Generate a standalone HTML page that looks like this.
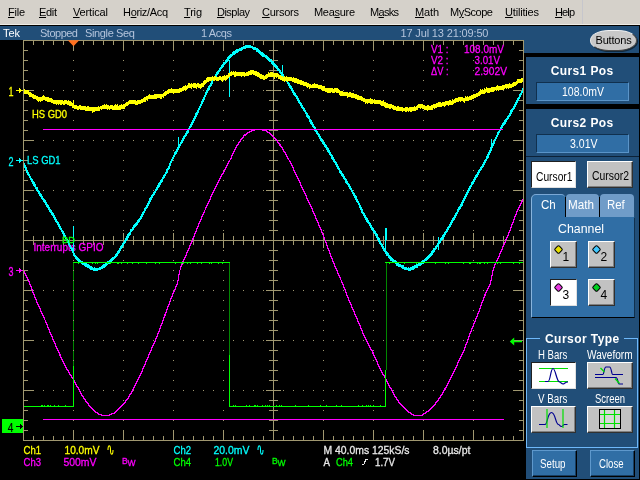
<!DOCTYPE html>
<html><head><meta charset="utf-8"><title>Tek scope</title>
<style>
html,body{margin:0;padding:0;background:#000;}
body{width:640px;height:480px;position:relative;overflow:hidden;font-family:"Liberation Sans",sans-serif;}
#menubar{will-change:transform;position:absolute;left:0;top:0;width:640px;height:25px;box-sizing:border-box;border-bottom:1px solid #eeece6;background:#d5d1ca;}
#menubar .mi{position:absolute;top:6px;font-size:11px;line-height:12px;color:#000;white-space:nowrap;}
#menubar .mi u{text-decoration:underline;}
#menubar .vline{position:absolute;left:582px;top:0;width:1px;height:24px;background:#c6c6cc;}
#status{will-change:transform;position:absolute;left:0;top:26px;width:526px;height:14px;background:#214e78;}
#status .st{position:absolute;top:1px;font-size:11px;line-height:12px;white-space:nowrap;}
#scope{position:absolute;left:0;top:0;will-change:transform;}
#scope text{font-family:"Liberation Sans",sans-serif;}
#panel{will-change:transform;position:absolute;left:526px;top:26px;width:113px;height:453px;background:#214e78;overflow:hidden;}
#panel div{position:absolute;box-sizing:border-box;}
.lb{white-space:nowrap;}
.blk{left:0;width:114px;background:#000;}
.sep{left:0;width:114px;height:1px;background:#0c2238;}
.pill{background:#c8c8c8;border-radius:19px / 10.5px;letter-spacing:-0.2px;border:1px solid #888;border-top-color:#f0f0f0;border-left-color:#e8e8e8;border-bottom-color:#404040;border-right-color:#505050;box-shadow:1px 1px 0 #10283c;text-align:center;font-size:11px;line-height:19px;color:#000;}
.fld{background:#306ea5;border:1px solid;border-color:#10304e #5a94c8 #5a94c8 #10304e;}
.btn{background:#c2c2c2;border:1px solid;border-color:#fff #303030 #303030 #fff;box-shadow:inset -1px -1px 0 #808080;}
.btn.sel{background:#fff;border-color:#202020 #e0e0e0 #e0e0e0 #202020;box-shadow:none;}
.bbtn{background:#306ea5;border:1px solid;border-color:#5e98cc #000 #000 #5e98cc;box-shadow:inset -1px -1px 0 #173e62;}
.tabbody{background:#306ea5;border:1px solid;border-color:#306ea5 #10304e #000 #88b4dc;}
.tab{background:#709cc8;border-radius:4px 4px 0 0;}
.tab.on{background:#306ea5;border-top:1px solid #7aa8d6;border-left:1px solid #88b4dc;border-radius:5px 4px 0 0;}
.tsep{width:1px;background:#000;}
.grp{border:1px solid #6eb8fa;}
.grpt{background:#214e78;}
.led{position:absolute;left:3.5px;top:3.5px;width:5px;height:5px;border-radius:1.8px;border:1px solid #000;transform:rotate(45deg);}
.num{position:absolute;left:11.5px;top:9px;font-size:12px;line-height:13px;font-weight:normal;color:#000;}
</style></head>
<body>
<div id="menubar"><span class="mi" style="left:8px;letter-spacing:-0.24px"><u>F</u>ile</span><span class="mi" style="left:39px;letter-spacing:-0.32px"><u>E</u>dit</span><span class="mi" style="left:73px;letter-spacing:-0.15px"><u>V</u>ertical</span><span class="mi" style="left:123px;letter-spacing:-0.33px">H<u>o</u>riz/Acq</span><span class="mi" style="left:184px;letter-spacing:-0.18px"><u>T</u>rig</span><span class="mi" style="left:217px;letter-spacing:-0.51px"><u>D</u>isplay</span><span class="mi" style="left:262px;letter-spacing:-0.25px"><u>C</u>ursors</span><span class="mi" style="left:314px;letter-spacing:-0.30px">Mea<u>s</u>ure</span><span class="mi" style="left:370px;letter-spacing:-0.70px">M<u>a</u>sks</span><span class="mi" style="left:415px;letter-spacing:-0.15px"><u>M</u>ath</span><span class="mi" style="left:450px;letter-spacing:-0.48px">M<u>y</u>Scope</span><span class="mi" style="left:505px;letter-spacing:-0.18px"><u>U</u>tilities</span><span class="mi" style="left:555px;letter-spacing:-0.87px"><u>H</u>elp</span><div class="vline"></div></div>
<div id="status"><span class="st" style="left:3px;color:#fff;letter-spacing:-0.06px">Tek</span><span class="st" style="left:40px;color:#b4c4dc;letter-spacing:-0.50px">Stopped</span><span class="st" style="left:85px;color:#b4c4dc;letter-spacing:-0.36px">Single Seq</span><span class="st" style="left:201px;color:#b4c4dc;letter-spacing:-0.40px">1 Acqs</span><span class="st" style="left:400.5px;color:#b4c4dc;letter-spacing:-0.15px">17 Jul 13 21:09:50</span></div>
<div style="position:absolute;left:524px;top:40px;width:2px;height:13px;background:#214e78"></div>
<svg id="scope" width="640" height="480" viewBox="0 0 640 480">
<g shape-rendering="crispEdges" stroke="#008800" stroke-width="1">
<path d="M73.5 262V366M229.5 262V355M386.5 262V370"/>
</g>
<path shape-rendering="crispEdges" fill="none" stroke="#a09870" stroke-width="1" d="M23.5 40.5H523.5V440.5H23.5ZM24 50.5h4M523 50.5h-4M24 60.5h4M523 60.5h-4M24 70.5h4M523 70.5h-4M24 80.5h4M523 80.5h-4M24 90.5h10M523 90.5h-10M24 100.5h4M523 100.5h-4M24 110.5h4M523 110.5h-4M24 120.5h4M523 120.5h-4M24 130.5h4M523 130.5h-4M24 140.5h10M523 140.5h-10M24 150.5h4M523 150.5h-4M24 160.5h4M523 160.5h-4M24 170.5h4M523 170.5h-4M24 180.5h4M523 180.5h-4M24 190.5h10M523 190.5h-10M24 200.5h4M523 200.5h-4M24 210.5h4M523 210.5h-4M24 220.5h4M523 220.5h-4M24 230.5h4M523 230.5h-4M24 240.5h10M523 240.5h-10M24 250.5h4M523 250.5h-4M24 260.5h4M523 260.5h-4M24 270.5h4M523 270.5h-4M24 280.5h4M523 280.5h-4M24 290.5h10M523 290.5h-10M24 300.5h4M523 300.5h-4M24 310.5h4M523 310.5h-4M24 320.5h4M523 320.5h-4M24 330.5h4M523 330.5h-4M24 340.5h10M523 340.5h-10M24 350.5h4M523 350.5h-4M24 360.5h4M523 360.5h-4M24 370.5h4M523 370.5h-4M24 380.5h4M523 380.5h-4M24 390.5h10M523 390.5h-10M24 400.5h4M523 400.5h-4M24 410.5h4M523 410.5h-4M24 420.5h4M523 420.5h-4M24 430.5h4M523 430.5h-4M33.5 41v4M33.5 440v-4M43.5 41v4M43.5 440v-4M53.5 41v4M53.5 440v-4M63.5 41v4M63.5 440v-4M73.5 41v10M73.5 440v-10M83.5 41v4M83.5 440v-4M93.5 41v4M93.5 440v-4M103.5 41v4M103.5 440v-4M113.5 41v4M113.5 440v-4M123.5 41v10M123.5 440v-10M133.5 41v4M133.5 440v-4M143.5 41v4M143.5 440v-4M153.5 41v4M153.5 440v-4M163.5 41v4M163.5 440v-4M173.5 41v10M173.5 440v-10M183.5 41v4M183.5 440v-4M193.5 41v4M193.5 440v-4M203.5 41v4M203.5 440v-4M213.5 41v4M213.5 440v-4M223.5 41v10M223.5 440v-10M233.5 41v4M233.5 440v-4M243.5 41v4M243.5 440v-4M253.5 41v4M253.5 440v-4M263.5 41v4M263.5 440v-4M273.5 41v10M273.5 440v-10M283.5 41v4M283.5 440v-4M293.5 41v4M293.5 440v-4M303.5 41v4M303.5 440v-4M313.5 41v4M313.5 440v-4M323.5 41v10M323.5 440v-10M333.5 41v4M333.5 440v-4M343.5 41v4M343.5 440v-4M353.5 41v4M353.5 440v-4M363.5 41v4M363.5 440v-4M373.5 41v10M373.5 440v-10M383.5 41v4M383.5 440v-4M393.5 41v4M393.5 440v-4M403.5 41v4M403.5 440v-4M413.5 41v4M413.5 440v-4M423.5 41v10M423.5 440v-10M433.5 41v4M433.5 440v-4M443.5 41v4M443.5 440v-4M453.5 41v4M453.5 440v-4M463.5 41v4M463.5 440v-4M473.5 41v10M473.5 440v-10M483.5 41v4M483.5 440v-4M493.5 41v4M493.5 440v-4M503.5 41v4M503.5 440v-4M513.5 41v4M513.5 440v-4M273.5 41V440M24 240.5H523M269 50.5h9M269 60.5h9M269 70.5h9M269 80.5h9M266 90.5h15M269 100.5h9M269 110.5h9M269 120.5h9M269 130.5h9M266 140.5h15M269 150.5h9M269 160.5h9M269 170.5h9M269 180.5h9M266 190.5h15M269 200.5h9M269 210.5h9M269 220.5h9M269 230.5h9M269 250.5h9M269 260.5h9M269 270.5h9M269 280.5h9M266 290.5h15M269 300.5h9M269 310.5h9M269 320.5h9M269 330.5h9M266 340.5h15M269 350.5h9M269 360.5h9M269 370.5h9M269 380.5h9M266 390.5h15M269 400.5h9M269 410.5h9M269 420.5h9M269 430.5h9M33.5 236v9M43.5 236v9M53.5 236v9M63.5 236v9M73.5 233v15M83.5 236v9M93.5 236v9M103.5 236v9M113.5 236v9M123.5 233v15M133.5 236v9M143.5 236v9M153.5 236v9M163.5 236v9M173.5 233v15M183.5 236v9M193.5 236v9M203.5 236v9M213.5 236v9M223.5 233v15M233.5 236v9M243.5 236v9M253.5 236v9M263.5 236v9M283.5 236v9M293.5 236v9M303.5 236v9M313.5 236v9M323.5 233v15M333.5 236v9M343.5 236v9M353.5 236v9M363.5 236v9M373.5 233v15M383.5 236v9M393.5 236v9M403.5 236v9M413.5 236v9M423.5 233v15M433.5 236v9M443.5 236v9M453.5 236v9M463.5 236v9M473.5 233v15M483.5 236v9M493.5 236v9M503.5 236v9M513.5 236v9M73 50.5h1M73 60.5h1M73 70.5h1M73 80.5h1M73 90.5h1M73 100.5h1M73 110.5h1M73 120.5h1M73 130.5h1M73 140.5h1M73 150.5h1M73 160.5h1M73 170.5h1M73 180.5h1M73 190.5h1M73 200.5h1M73 210.5h1M73 220.5h1M73 230.5h1M73 240.5h1M73 250.5h1M73 260.5h1M73 270.5h1M73 280.5h1M73 290.5h1M73 300.5h1M73 310.5h1M73 320.5h1M73 330.5h1M73 340.5h1M73 350.5h1M73 360.5h1M73 370.5h1M73 380.5h1M73 390.5h1M73 400.5h1M73 410.5h1M73 420.5h1M73 430.5h1M123 50.5h1M123 60.5h1M123 70.5h1M123 80.5h1M123 90.5h1M123 100.5h1M123 110.5h1M123 120.5h1M123 130.5h1M123 140.5h1M123 150.5h1M123 160.5h1M123 170.5h1M123 180.5h1M123 190.5h1M123 200.5h1M123 210.5h1M123 220.5h1M123 230.5h1M123 240.5h1M123 250.5h1M123 260.5h1M123 270.5h1M123 280.5h1M123 290.5h1M123 300.5h1M123 310.5h1M123 320.5h1M123 330.5h1M123 340.5h1M123 350.5h1M123 360.5h1M123 370.5h1M123 380.5h1M123 390.5h1M123 400.5h1M123 410.5h1M123 420.5h1M123 430.5h1M173 50.5h1M173 60.5h1M173 70.5h1M173 80.5h1M173 90.5h1M173 100.5h1M173 110.5h1M173 120.5h1M173 130.5h1M173 140.5h1M173 150.5h1M173 160.5h1M173 170.5h1M173 180.5h1M173 190.5h1M173 200.5h1M173 210.5h1M173 220.5h1M173 230.5h1M173 240.5h1M173 250.5h1M173 260.5h1M173 270.5h1M173 280.5h1M173 290.5h1M173 300.5h1M173 310.5h1M173 320.5h1M173 330.5h1M173 340.5h1M173 350.5h1M173 360.5h1M173 370.5h1M173 380.5h1M173 390.5h1M173 400.5h1M173 410.5h1M173 420.5h1M173 430.5h1M223 50.5h1M223 60.5h1M223 70.5h1M223 80.5h1M223 90.5h1M223 100.5h1M223 110.5h1M223 120.5h1M223 130.5h1M223 140.5h1M223 150.5h1M223 160.5h1M223 170.5h1M223 180.5h1M223 190.5h1M223 200.5h1M223 210.5h1M223 220.5h1M223 230.5h1M223 240.5h1M223 250.5h1M223 260.5h1M223 270.5h1M223 280.5h1M223 290.5h1M223 300.5h1M223 310.5h1M223 320.5h1M223 330.5h1M223 340.5h1M223 350.5h1M223 360.5h1M223 370.5h1M223 380.5h1M223 390.5h1M223 400.5h1M223 410.5h1M223 420.5h1M223 430.5h1M323 50.5h1M323 60.5h1M323 70.5h1M323 80.5h1M323 90.5h1M323 100.5h1M323 110.5h1M323 120.5h1M323 130.5h1M323 140.5h1M323 150.5h1M323 160.5h1M323 170.5h1M323 180.5h1M323 190.5h1M323 200.5h1M323 210.5h1M323 220.5h1M323 230.5h1M323 240.5h1M323 250.5h1M323 260.5h1M323 270.5h1M323 280.5h1M323 290.5h1M323 300.5h1M323 310.5h1M323 320.5h1M323 330.5h1M323 340.5h1M323 350.5h1M323 360.5h1M323 370.5h1M323 380.5h1M323 390.5h1M323 400.5h1M323 410.5h1M323 420.5h1M323 430.5h1M373 50.5h1M373 60.5h1M373 70.5h1M373 80.5h1M373 90.5h1M373 100.5h1M373 110.5h1M373 120.5h1M373 130.5h1M373 140.5h1M373 150.5h1M373 160.5h1M373 170.5h1M373 180.5h1M373 190.5h1M373 200.5h1M373 210.5h1M373 220.5h1M373 230.5h1M373 240.5h1M373 250.5h1M373 260.5h1M373 270.5h1M373 280.5h1M373 290.5h1M373 300.5h1M373 310.5h1M373 320.5h1M373 330.5h1M373 340.5h1M373 350.5h1M373 360.5h1M373 370.5h1M373 380.5h1M373 390.5h1M373 400.5h1M373 410.5h1M373 420.5h1M373 430.5h1M423 50.5h1M423 60.5h1M423 70.5h1M423 80.5h1M423 90.5h1M423 100.5h1M423 110.5h1M423 120.5h1M423 130.5h1M423 140.5h1M423 150.5h1M423 160.5h1M423 170.5h1M423 180.5h1M423 190.5h1M423 200.5h1M423 210.5h1M423 220.5h1M423 230.5h1M423 240.5h1M423 250.5h1M423 260.5h1M423 270.5h1M423 280.5h1M423 290.5h1M423 300.5h1M423 310.5h1M423 320.5h1M423 330.5h1M423 340.5h1M423 350.5h1M423 360.5h1M423 370.5h1M423 380.5h1M423 390.5h1M423 400.5h1M423 410.5h1M423 420.5h1M423 430.5h1M473 50.5h1M473 60.5h1M473 70.5h1M473 80.5h1M473 90.5h1M473 100.5h1M473 110.5h1M473 120.5h1M473 130.5h1M473 140.5h1M473 150.5h1M473 160.5h1M473 170.5h1M473 180.5h1M473 190.5h1M473 200.5h1M473 210.5h1M473 220.5h1M473 230.5h1M473 240.5h1M473 250.5h1M473 260.5h1M473 270.5h1M473 280.5h1M473 290.5h1M473 300.5h1M473 310.5h1M473 320.5h1M473 330.5h1M473 340.5h1M473 350.5h1M473 360.5h1M473 370.5h1M473 380.5h1M473 390.5h1M473 400.5h1M473 410.5h1M473 420.5h1M473 430.5h1M33 90.5h1M43 90.5h1M53 90.5h1M63 90.5h1M83 90.5h1M93 90.5h1M103 90.5h1M113 90.5h1M133 90.5h1M143 90.5h1M153 90.5h1M163 90.5h1M183 90.5h1M193 90.5h1M203 90.5h1M213 90.5h1M233 90.5h1M243 90.5h1M253 90.5h1M263 90.5h1M283 90.5h1M293 90.5h1M303 90.5h1M313 90.5h1M333 90.5h1M343 90.5h1M353 90.5h1M363 90.5h1M383 90.5h1M393 90.5h1M403 90.5h1M413 90.5h1M433 90.5h1M443 90.5h1M453 90.5h1M463 90.5h1M483 90.5h1M493 90.5h1M503 90.5h1M513 90.5h1M33 140.5h1M43 140.5h1M53 140.5h1M63 140.5h1M83 140.5h1M93 140.5h1M103 140.5h1M113 140.5h1M133 140.5h1M143 140.5h1M153 140.5h1M163 140.5h1M183 140.5h1M193 140.5h1M203 140.5h1M213 140.5h1M233 140.5h1M243 140.5h1M253 140.5h1M263 140.5h1M283 140.5h1M293 140.5h1M303 140.5h1M313 140.5h1M333 140.5h1M343 140.5h1M353 140.5h1M363 140.5h1M383 140.5h1M393 140.5h1M403 140.5h1M413 140.5h1M433 140.5h1M443 140.5h1M453 140.5h1M463 140.5h1M483 140.5h1M493 140.5h1M503 140.5h1M513 140.5h1M33 190.5h1M43 190.5h1M53 190.5h1M63 190.5h1M83 190.5h1M93 190.5h1M103 190.5h1M113 190.5h1M133 190.5h1M143 190.5h1M153 190.5h1M163 190.5h1M183 190.5h1M193 190.5h1M203 190.5h1M213 190.5h1M233 190.5h1M243 190.5h1M253 190.5h1M263 190.5h1M283 190.5h1M293 190.5h1M303 190.5h1M313 190.5h1M333 190.5h1M343 190.5h1M353 190.5h1M363 190.5h1M383 190.5h1M393 190.5h1M403 190.5h1M413 190.5h1M433 190.5h1M443 190.5h1M453 190.5h1M463 190.5h1M483 190.5h1M493 190.5h1M503 190.5h1M513 190.5h1M33 290.5h1M43 290.5h1M53 290.5h1M63 290.5h1M83 290.5h1M93 290.5h1M103 290.5h1M113 290.5h1M133 290.5h1M143 290.5h1M153 290.5h1M163 290.5h1M183 290.5h1M193 290.5h1M203 290.5h1M213 290.5h1M233 290.5h1M243 290.5h1M253 290.5h1M263 290.5h1M283 290.5h1M293 290.5h1M303 290.5h1M313 290.5h1M333 290.5h1M343 290.5h1M353 290.5h1M363 290.5h1M383 290.5h1M393 290.5h1M403 290.5h1M413 290.5h1M433 290.5h1M443 290.5h1M453 290.5h1M463 290.5h1M483 290.5h1M493 290.5h1M503 290.5h1M513 290.5h1M33 340.5h1M43 340.5h1M53 340.5h1M63 340.5h1M83 340.5h1M93 340.5h1M103 340.5h1M113 340.5h1M133 340.5h1M143 340.5h1M153 340.5h1M163 340.5h1M183 340.5h1M193 340.5h1M203 340.5h1M213 340.5h1M233 340.5h1M243 340.5h1M253 340.5h1M263 340.5h1M283 340.5h1M293 340.5h1M303 340.5h1M313 340.5h1M333 340.5h1M343 340.5h1M353 340.5h1M363 340.5h1M383 340.5h1M393 340.5h1M403 340.5h1M413 340.5h1M433 340.5h1M443 340.5h1M453 340.5h1M463 340.5h1M483 340.5h1M493 340.5h1M503 340.5h1M513 340.5h1M33 390.5h1M43 390.5h1M53 390.5h1M63 390.5h1M83 390.5h1M93 390.5h1M103 390.5h1M113 390.5h1M133 390.5h1M143 390.5h1M153 390.5h1M163 390.5h1M183 390.5h1M193 390.5h1M203 390.5h1M213 390.5h1M233 390.5h1M243 390.5h1M253 390.5h1M263 390.5h1M283 390.5h1M293 390.5h1M303 390.5h1M313 390.5h1M333 390.5h1M343 390.5h1M353 390.5h1M363 390.5h1M383 390.5h1M393 390.5h1M403 390.5h1M413 390.5h1M433 390.5h1M443 390.5h1M453 390.5h1M463 390.5h1M483 390.5h1M493 390.5h1M503 390.5h1M513 390.5h1"/>
<text x="32.0" y="118.0" font-size="11" fill="#ffff00" stroke="#ffff00" stroke-width="0.3" textLength="35.0" lengthAdjust="spacingAndGlyphs">HS GD0</text>
<text x="27.0" y="164.3" font-size="11" fill="#00ffff" stroke="#00ffff" stroke-width="0.3" textLength="33.6" lengthAdjust="spacingAndGlyphs">LS GD1</text>
<text x="33.5" y="251.0" font-size="11" fill="#ff00ff" stroke="#ff00ff" stroke-width="0.3" textLength="70.0" lengthAdjust="spacingAndGlyphs">Interrupts GPIO</text>
<g shape-rendering="crispEdges" fill="none" stroke-width="1">
<path stroke="#00ffff" d="M24.5 163V168M25.5 165V170M26.5 167V173M27.5 170V175M28.5 172V176M29.5 174V178M30.5 176V180M31.5 178V182M32.5 179V184M33.5 181V186M34.5 182V187M35.5 184V189M36.5 187V191M37.5 187V192M38.5 190V194M39.5 191V196M40.5 193V197M41.5 194V199M42.5 196V200M43.5 198V202M44.5 199V203M45.5 200V205M46.5 202V207M47.5 204V208M48.5 205V210M49.5 207V212M50.5 209V213M51.5 210V215M52.5 212V216M53.5 213V218M54.5 215V220M55.5 217V222M56.5 219V223M57.5 221V225M58.5 222V227M59.5 224V229M60.5 226V230M61.5 228V232M62.5 230V234M63.5 231V236M64.5 233V237M65.5 235V239M66.5 237V241M67.5 239V243M68.5 240V245M69.5 243V247M70.5 245V249M71.5 247V251M72.5 248V253M73.5 250V256M74.5 253V257M75.5 255V259M76.5 256V260M77.5 257V261M78.5 258V262M79.5 259V263M80.5 260V263M81.5 261V264M82.5 261V265M83.5 262V265M84.5 263V266M85.5 263V267M86.5 263V267M87.5 264V268M88.5 264V268M89.5 265V269M90.5 266V270M91.5 266V270M92.5 267V270M93.5 268V271M94.5 267V271M95.5 268V271M96.5 268V271M97.5 268V271M98.5 268V270M99.5 267V270M100.5 267V270M101.5 266V269M102.5 265V269M103.5 264V268M104.5 264V268M105.5 263V267M106.5 263V266M107.5 261V265M108.5 261V264M109.5 260V264M110.5 259V263M111.5 258V262M112.5 257V261M113.5 257V260M114.5 256V259M115.5 254V258M116.5 253V257M117.5 251V256M118.5 250V254M119.5 248V253M120.5 246V251M121.5 245V249M122.5 243V248M123.5 242V246M124.5 240V244M125.5 238V243M126.5 236V241M127.5 234V240M128.5 233V238M129.5 232V236M130.5 229V235M131.5 229V232M132.5 227V231M133.5 225V230M134.5 224V228M135.5 223V227M136.5 222V226M137.5 220V225M138.5 219V223M139.5 218V222M140.5 216V220M141.5 214V219M142.5 212V217M143.5 211V215M144.5 208V213M145.5 207V211M146.5 205V209M147.5 203V208M148.5 201V206M149.5 198V204M150.5 197V202M151.5 195V200M152.5 194V198M153.5 192V196M154.5 191V195M155.5 189V193M156.5 187V191M157.5 185V190M158.5 183V188M159.5 182V187M160.5 180V185M161.5 179V183M162.5 177V182M163.5 175V179M164.5 174V178M165.5 172V176M166.5 169V174M167.5 168V173M168.5 166V170M169.5 163V169M170.5 161V166M171.5 159V163M172.5 157V161M173.5 155V159M174.5 152V157M175.5 151V155M176.5 149V154M177.5 147V152M178.5 146V150M179.5 144V148M180.5 142V146M181.5 140V144M182.5 138V143M183.5 136V141M184.5 135V139M185.5 133V137M186.5 131V136M187.5 130V134M188.5 128V133M189.5 126V130M190.5 124V128M191.5 122V127M192.5 120V125M193.5 118V123M194.5 116V121M195.5 113V119M196.5 112V117M197.5 110V115M198.5 108V113M199.5 106V110M200.5 104V108M201.5 101V106M202.5 99V104M203.5 97V102M204.5 95V100M205.5 92V97M206.5 90V95M207.5 88V93M208.5 86V91M209.5 85V90M210.5 83V87M211.5 81V86M212.5 79V84M213.5 77V81M214.5 76V80M215.5 74V79M216.5 72V77M217.5 71V75M218.5 70V74M219.5 68V72M220.5 67V71M221.5 65V69M222.5 64V68M223.5 62V67M224.5 62V65M225.5 60V64M226.5 59V63M227.5 57V62M228.5 56V61M229.5 55V59M230.5 54V58M231.5 54V57M232.5 52V56M233.5 51V55M234.5 51V55M235.5 50V54M236.5 49V53M237.5 49V53M238.5 49V52M239.5 48V51M240.5 48V51M241.5 47V51M242.5 47V50M243.5 46V49M244.5 46V49M245.5 45V49M246.5 45V48M247.5 45V48M248.5 45V48M249.5 45V48M250.5 45V48M251.5 46V48M252.5 46V49M253.5 47V50M254.5 47V50M255.5 47V50M256.5 48V52M257.5 48V52M258.5 49V53M259.5 50V54M260.5 51V55M261.5 52V56M262.5 52V57M263.5 53V57M264.5 54V57M265.5 55V58M266.5 55V59M267.5 56V60M268.5 57V61M269.5 58V62M270.5 59V62M271.5 59V64M272.5 61V65M273.5 61V66M274.5 63V67M275.5 64V68M276.5 65V69M277.5 66V71M278.5 68V71M279.5 69V73M280.5 70V74M281.5 72V76M282.5 72V77M283.5 74V78M284.5 76V80M285.5 77V81M286.5 78V82M287.5 80V84M288.5 82V86M289.5 83V88M290.5 85V89M291.5 86V91M292.5 88V93M293.5 90V95M294.5 92V96M295.5 93V97M296.5 95V99M297.5 96V101M298.5 98V103M299.5 100V104M300.5 102V106M301.5 103V108M302.5 105V109M303.5 107V111M304.5 108V112M305.5 110V114M306.5 112V117M307.5 113V118M308.5 115V119M309.5 116V122M310.5 119V124M311.5 120V125M312.5 122V127M313.5 124V128M314.5 126V131M315.5 127V132M316.5 129V134M317.5 131V135M318.5 133V137M319.5 134V139M320.5 136V141M321.5 138V142M322.5 139V144M323.5 141V145M324.5 142V147M325.5 144V148M326.5 145V150M327.5 147V152M328.5 148V153M329.5 150V155M330.5 152V156M331.5 154V159M332.5 155V160M333.5 157V162M334.5 159V163M335.5 161V165M336.5 162V167M337.5 164V169M338.5 166V170M339.5 168V173M340.5 170V174M341.5 171V176M342.5 173V177M343.5 174V179M344.5 176V180M345.5 178V183M346.5 179V184M347.5 181V185M348.5 183V187M349.5 184V189M350.5 186V190M351.5 188V192M352.5 190V194M353.5 192V196M354.5 193V198M355.5 195V200M356.5 196V202M357.5 199V203M358.5 201V205M359.5 203V208M360.5 205V210M361.5 207V213M362.5 209V214M363.5 212V216M364.5 213V218M365.5 215V220M366.5 217V222M367.5 218V223M368.5 220V224M369.5 222V226M370.5 223V228M371.5 225V230M372.5 227V231M373.5 228V233M374.5 230V234M375.5 231V236M376.5 233V238M377.5 234V240M378.5 237V242M379.5 238V244M380.5 241V245M381.5 243V247M382.5 244V249M383.5 246V251M384.5 248V252M385.5 249V254M386.5 251V256M387.5 252V256M388.5 253V258M389.5 255V259M390.5 256V261M391.5 257V261M392.5 258V262M393.5 259V262M394.5 260V263M395.5 260V264M396.5 261V266M397.5 262V266M398.5 263V267M399.5 264V267M400.5 264V267M401.5 265V268M402.5 265V269M403.5 265V269M404.5 267V270M405.5 267V270M406.5 267V270M407.5 268V270M408.5 267V271M409.5 268V271M410.5 267V271M411.5 267V270M412.5 266V270M413.5 266V270M414.5 265V269M415.5 265V268M416.5 264V268M417.5 264V268M418.5 263V266M419.5 262V266M420.5 262V266M421.5 261V265M422.5 260V264M423.5 260V264M424.5 259V262M425.5 258V261M426.5 257V261M427.5 256V260M428.5 255V259M429.5 254V258M430.5 253V257M431.5 251V256M432.5 250V255M433.5 248V253M434.5 248V252M435.5 246V250M436.5 245V249M437.5 243V247M438.5 241V246M439.5 240V244M440.5 238V243M441.5 237V241M442.5 235V240M443.5 234V239M444.5 232V237M445.5 231V235M446.5 229V233M447.5 227V232M448.5 226V230M449.5 224V228M450.5 222V227M451.5 220V225M452.5 218V223M453.5 217V221M454.5 215V220M455.5 213V218M456.5 212V216M457.5 209V214M458.5 207V212M459.5 206V210M460.5 204V209M461.5 202V207M462.5 200V206M463.5 198V203M464.5 196V201M465.5 194V199M466.5 192V197M467.5 190V195M468.5 188V193M469.5 186V191M470.5 185V189M471.5 182V187M472.5 181V185M473.5 179V184M474.5 177V182M475.5 175V180M476.5 174V178M477.5 172V177M478.5 170V175M479.5 169V173M480.5 167V171M481.5 166V170M482.5 164V168M483.5 162V167M484.5 160V165M485.5 159V163M486.5 156V161M487.5 154V159M488.5 152V158M489.5 150V155M490.5 147V153M491.5 146V151M492.5 143V148M493.5 141V146M494.5 139V144M495.5 137V141M496.5 135V139M497.5 132V137M498.5 131V135M499.5 129V133M500.5 127V131M501.5 125V130M502.5 123V128M503.5 122V126M504.5 120V125M505.5 119V124M506.5 118V122M507.5 116V120M508.5 115V119M509.5 113V117M510.5 110V116M511.5 109V114M512.5 108V112M513.5 106V110M514.5 104V109M515.5 102V107M516.5 100V105M517.5 98V103M518.5 97V101M519.5 94V99M520.5 93V97M521.5 91V95M522.5 88V93"/>
<path stroke="#00ffff" d="M73.5 226V253M178.5 137V150M229.5 60V97M282.5 65V78M385.5 228V250M386.5 228V240M438.5 237V250M491.5 139V148"/>
<path stroke="#ff00ff" d="M43 129.5H503M43 419.5H504"/>
<path stroke="#ff00ff" d="M24.5 271V274M25.5 273V276M26.5 275V278M27.5 277V280M28.5 279V282M29.5 281V285M30.5 284V287M31.5 286V290M32.5 289V293M33.5 292V295M34.5 294V298M35.5 297V300M36.5 299V303M37.5 302V305M38.5 304V307M39.5 306V309M40.5 308V312M41.5 311V314M42.5 313V316M43.5 315V318M44.5 317V320M45.5 320V323M46.5 322V325M47.5 324V328M48.5 327V330M49.5 329V333M50.5 332V335M51.5 334V337M52.5 336V340M53.5 339V342M54.5 341V344M55.5 343V347M56.5 346V349M57.5 348V351M58.5 350V353M59.5 352V356M60.5 354V358M61.5 357V360M62.5 359V362M63.5 361V364M64.5 363V366M65.5 365V368M66.5 367V370M67.5 369V371M68.5 370V373M69.5 372V375M70.5 374V376M71.5 375V378M72.5 377V379M73.5 378V381M74.5 380V383M75.5 382V385M76.5 384V387M77.5 386V388M78.5 387V390M79.5 389V392M80.5 391V394M81.5 393V396M82.5 395V397M83.5 396V399M84.5 398V400M85.5 399V402M86.5 401V403M87.5 402V404M88.5 403V406M89.5 405V407M90.5 406V408M91.5 407V409M92.5 408V410M93.5 409V411M94.5 410V412M95.5 411V413M96.5 412V413M97.5 412V414M98.5 413V415M99.5 414V415M100.5 414V415M101.5 414V416M102.5 415V416M103.5 415V416M104.5 415V416M105.5 415V416M106.5 415V416M107.5 415V416M108.5 415V416M109.5 414V416M110.5 414V415M111.5 413V415M112.5 413V414M113.5 413V414M114.5 412V414M115.5 411V413M116.5 410V412M117.5 409V411M118.5 408V410M119.5 407V409M120.5 406V408M121.5 405V407M122.5 404V406M123.5 403V405M124.5 402V404M125.5 400V403M126.5 399V401M127.5 398V400M128.5 396V399M129.5 394V397M130.5 393V395M131.5 391V394M132.5 389V392M133.5 387V390M134.5 385V388M135.5 383V386M136.5 381V384M137.5 379V382M138.5 377V380M139.5 375V378M140.5 373V376M141.5 371V374M142.5 368V372M143.5 366V369M144.5 364V367M145.5 361V365M146.5 359V362M147.5 357V360M148.5 354V358M149.5 352V355M150.5 350V353M151.5 347V351M152.5 345V348M153.5 343V346M154.5 341V344M155.5 338V342M156.5 336V339M157.5 333V337M158.5 331V334M159.5 328V332M160.5 325V329M161.5 323V326M162.5 320V324M163.5 317V321M164.5 314V318M165.5 312V316M166.5 309V313M167.5 306V310M168.5 304V307M169.5 301V305M170.5 298V302M171.5 296V299M172.5 293V297M173.5 291V294M174.5 289V292M175.5 286V290M176.5 284V287M177.5 280V285M178.5 274V281M179.5 270V275M180.5 266V270M181.5 264V267M182.5 261V265M183.5 259V262M184.5 257V260M185.5 255V258M186.5 252V256M187.5 250V253M188.5 248V251M189.5 245V249M190.5 243V246M191.5 241V244M192.5 238V242M193.5 236V239M194.5 233V237M195.5 231V234M196.5 228V232M197.5 226V229M198.5 223V227M199.5 221V224M200.5 219V222M201.5 216V220M202.5 214V217M203.5 212V215M204.5 210V213M205.5 207V210M206.5 205V208M207.5 203V206M208.5 201V204M209.5 199V202M210.5 196V200M211.5 194V197M212.5 192V195M213.5 190V193M214.5 188V191M215.5 186V189M216.5 184V187M217.5 182V185M218.5 180V183M219.5 178V181M220.5 176V179M221.5 174V177M222.5 173V175M223.5 171V174M224.5 169V172M225.5 167V170M226.5 165V168M227.5 163V166M228.5 161V164M229.5 160V162M230.5 158V160M231.5 155V159M232.5 153V156M233.5 151V154M234.5 149V152M235.5 147V150M236.5 145V148M237.5 144V146M238.5 142V145M239.5 141V143M240.5 139V142M241.5 138V140M242.5 137V139M243.5 135V138M244.5 134V136M245.5 134V136M246.5 133V135M247.5 132V134M248.5 132V133M249.5 131V133M250.5 131V132M251.5 130V132M252.5 130V131M253.5 130V131M254.5 129V131M255.5 129V130M256.5 129V130M257.5 129V130M258.5 129V130M259.5 129V130M260.5 129V130M261.5 129V130M262.5 129V131M263.5 130V131M264.5 130V131M265.5 130V131M266.5 130V132M267.5 131V133M268.5 132V133M269.5 132V134M270.5 133V135M271.5 134V136M272.5 135V137M273.5 136V138M274.5 137V139M275.5 138V140M276.5 139V141M277.5 140V143M278.5 142V144M279.5 143V146M280.5 144V147M281.5 146V148M282.5 147V150M283.5 149V152M284.5 151V153M285.5 152V155M286.5 154V157M287.5 156V159M288.5 158V160M289.5 160V162M290.5 161V164M291.5 163V166M292.5 165V168M293.5 167V171M294.5 170V173M295.5 172V175M296.5 174V177M297.5 176V179M298.5 178V181M299.5 180V183M300.5 182V186M301.5 185V188M302.5 187V190M303.5 189V192M304.5 191V194M305.5 193V196M306.5 195V199M307.5 198V201M308.5 200V203M309.5 202V205M310.5 204V207M311.5 206V209M312.5 208V212M313.5 211V214M314.5 213V216M315.5 215V219M316.5 218V221M317.5 220V223M318.5 222V226M319.5 225V228M320.5 227V230M321.5 229V233M322.5 232V235M323.5 234V238M324.5 237V240M325.5 240V243M326.5 242V246M327.5 245V249M328.5 248V251M329.5 250V254M330.5 253V257M331.5 256V259M332.5 258V262M333.5 261V264M334.5 263V267M335.5 266V269M336.5 268V271M337.5 270V274M338.5 273V276M339.5 275V278M340.5 277V280M341.5 280V283M342.5 282V285M343.5 284V288M344.5 287V290M345.5 289V293M346.5 292V296M347.5 295V298M348.5 297V301M349.5 300V303M350.5 302V305M351.5 304V308M352.5 307V310M353.5 309V312M354.5 311V315M355.5 314V317M356.5 316V319M357.5 318V322M358.5 321V324M359.5 323V326M360.5 325V329M361.5 328V331M362.5 330V334M363.5 333V336M364.5 335V338M365.5 337V340M366.5 339V342M367.5 341V344M368.5 343V346M369.5 345V348M370.5 347V350M371.5 349V351M372.5 350V354M373.5 352V356M374.5 355V358M375.5 357V360M376.5 359V362M377.5 361V365M378.5 364V367M379.5 366V369M380.5 368V371M381.5 370V373M382.5 372V375M383.5 374V376M384.5 375V378M385.5 377V380M386.5 379V382M387.5 381V384M388.5 383V386M389.5 385V388M390.5 387V389M391.5 388V391M392.5 390V393M393.5 392V395M394.5 394V397M395.5 396V398M396.5 397V400M397.5 399V401M398.5 400V403M399.5 402V404M400.5 403V405M401.5 404V406M402.5 405V407M403.5 406V408M404.5 407V409M405.5 408V410M406.5 409V411M407.5 410V412M408.5 411V413M409.5 412V413M410.5 412V414M411.5 413V415M412.5 414V415M413.5 414V416M414.5 415V416M415.5 415V416M416.5 415V416M417.5 415V416M418.5 415V416M419.5 415V416M420.5 415V416M421.5 415V416M422.5 414V416M423.5 413V415M424.5 413V414M425.5 412V414M426.5 411V413M427.5 411V412M428.5 410V412M429.5 409V411M430.5 408V410M431.5 407V409M432.5 406V408M433.5 405V407M434.5 404V406M435.5 402V405M436.5 401V403M437.5 400V402M438.5 398V401M439.5 397V399M440.5 395V398M441.5 394V396M442.5 392V395M443.5 390V393M444.5 388V391M445.5 387V390M446.5 385V388M447.5 383V386M448.5 381V384M449.5 379V382M450.5 377V380M451.5 375V378M452.5 373V376M453.5 371V374M454.5 369V372M455.5 367V370M456.5 365V368M457.5 362V366M458.5 360V363M459.5 358V361M460.5 356V359M461.5 354V357M462.5 352V355M463.5 350V353M464.5 347V351M465.5 344V348M466.5 342V345M467.5 339V343M468.5 336V340M469.5 333V337M470.5 331V334M471.5 328V332M472.5 326V329M473.5 323V327M474.5 321V324M475.5 318V322M476.5 316V319M477.5 313V317M478.5 311V314M479.5 308V312M480.5 305V309M481.5 302V306M482.5 300V303M483.5 297V301M484.5 294V298M485.5 292V296M486.5 290V293M487.5 288V291M488.5 286V289M489.5 284V287M490.5 280V285M491.5 275V281M492.5 270V276M493.5 267V271M494.5 264V268M495.5 262V265M496.5 260V263M497.5 258V261M498.5 256V259M499.5 253V257M500.5 251V254M501.5 249V252M502.5 246V250M503.5 244V247M504.5 242V245M505.5 239V243M506.5 237V240M507.5 235V238M508.5 232V236M509.5 230V233M510.5 227V231M511.5 224V228M512.5 222V225M513.5 219V223M514.5 216V220M515.5 214V217M516.5 211V215M517.5 209V212M518.5 207V210M519.5 205V208M520.5 203V206M521.5 201V204M522.5 199V202"/>
<path stroke="#00ff00" d="M24 406.5H74M41 405.5h1M42 405.5h1M44 405.5h1M47 405.5h1M48 405.5h1M50 405.5h1M54 405.5h1M58 405.5h1M65 405.5h1M73 262.5H230M78 263.5h1M92 263.5h1M95 263.5h1M97 263.5h1M107 263.5h1M110 263.5h1M117 263.5h1M118 263.5h1M121 263.5h1M127 263.5h1M132 263.5h1M138 263.5h1M146 263.5h1M155 263.5h1M159 263.5h1M175 263.5h1M181 263.5h1M183 263.5h1M187 263.5h1M190 263.5h1M197 263.5h1M201 263.5h1M209 263.5h1M211 263.5h1M218 263.5h1M222 263.5h1M229 406.5H386M233 405.5h1M235 405.5h1M246 405.5h1M249 405.5h1M254 405.5h1M255 405.5h1M257 405.5h1M262 405.5h1M265 405.5h1M267 405.5h1M269 405.5h1M276 405.5h1M279 405.5h1M281 405.5h1M295 405.5h1M308 405.5h1M320 405.5h1M326 405.5h1M336 405.5h1M341 405.5h1M358 405.5h1M362 405.5h1M366 405.5h1M368 405.5h1M370 405.5h1M373 405.5h1M380 405.5h1M385 262.5H523M389 263.5h1M404 263.5h1M416 263.5h1M435 263.5h1M445 263.5h1M448 263.5h1M463 263.5h1M469 263.5h1M470 263.5h1M477 263.5h1M479 263.5h1M480 263.5h1M484 263.5h1M487 263.5h1M497 263.5h1M500 263.5h1M513 263.5h1M519 263.5h1M73.5 366V407M229.5 355V407M385.5 370V407"/>
<path stroke="#ffff00" d="M24.5 89V94M25.5 90V94M26.5 90V94M27.5 90V94M28.5 90V95M29.5 92V97M30.5 92V97M31.5 93V97M32.5 94V98M33.5 94V99M34.5 95V99M35.5 95V99M36.5 96V100M37.5 96V101M38.5 97V102M39.5 97V101M40.5 97V102M41.5 97V101M42.5 96V101M43.5 95V100M44.5 96V100M45.5 97V101M46.5 97V101M47.5 97V102M48.5 97V102M49.5 98V102M50.5 98V102M51.5 98V103M52.5 99V103M53.5 100V104M54.5 100V104M55.5 100V104M56.5 100V105M57.5 100V104M58.5 100V105M59.5 100V104M60.5 100V105M61.5 100V105M62.5 100V104M63.5 101V105M64.5 100V105M65.5 100V104M66.5 100V104M67.5 101V105M68.5 100V105M69.5 101V106M70.5 101V106M71.5 102V106M72.5 103V108M73.5 104V108M74.5 105V109M75.5 105V109M76.5 105V109M77.5 106V110M78.5 106V110M79.5 105V109M80.5 105V110M81.5 106V110M82.5 106V110M83.5 106V110M84.5 106V110M85.5 106V111M86.5 107V111M87.5 106V111M88.5 106V111M89.5 107V111M90.5 107V111M91.5 107V111M92.5 107V113M93.5 107V112M94.5 107V112M95.5 107V111M96.5 107V111M97.5 107V111M98.5 106V111M99.5 107V111M100.5 106V109M101.5 106V110M102.5 105V109M103.5 105V109M104.5 104V109M105.5 105V109M106.5 104V109M107.5 105V110M108.5 105V109M109.5 106V110M110.5 105V109M111.5 105V109M112.5 105V110M113.5 106V110M114.5 105V110M115.5 104V110M116.5 105V110M117.5 104V110M118.5 106V110M119.5 105V110M120.5 105V110M121.5 104V109M122.5 105V109M123.5 104V109M124.5 104V109M125.5 103V107M126.5 102V106M127.5 102V106M128.5 101V105M129.5 100V104M130.5 100V104M131.5 100V104M132.5 100V104M133.5 100V104M134.5 100V104M135.5 100V105M136.5 101V105M137.5 100V105M138.5 100V104M139.5 100V104M140.5 100V104M141.5 99V103M142.5 99V103M143.5 98V102M144.5 97V102M145.5 97V102M146.5 96V100M147.5 96V101M148.5 95V99M149.5 94V99M150.5 95V99M151.5 95V99M152.5 95V99M153.5 95V99M154.5 94V99M155.5 94V99M156.5 94V99M157.5 94V98M158.5 94V98M159.5 94V98M160.5 94V99M161.5 94V99M162.5 94V97M163.5 93V98M164.5 92V96M165.5 91V96M166.5 91V95M167.5 90V94M168.5 89V94M169.5 89V93M170.5 89V93M171.5 88V93M172.5 89V93M173.5 89V94M174.5 89V93M175.5 89V93M176.5 89V93M177.5 89V93M178.5 89V93M179.5 88V93M180.5 88V92M181.5 88V92M182.5 87V91M183.5 86V91M184.5 86V90M185.5 85V91M186.5 86V90M187.5 85V89M188.5 83V88M189.5 83V88M190.5 84V88M191.5 83V89M192.5 84V87M193.5 83V88M194.5 83V88M195.5 83V88M196.5 84V89M197.5 83V87M198.5 83V88M199.5 84V88M200.5 84V89M201.5 83V88M202.5 83V87M203.5 81V87M204.5 80V85M205.5 80V84M206.5 78V83M207.5 77V82M208.5 77V82M209.5 77V81M210.5 77V81M211.5 77V81M212.5 76V80M213.5 77V81M214.5 76V81M215.5 76V80M216.5 77V81M217.5 77V81M218.5 77V81M219.5 76V80M220.5 76V80M221.5 77V81M222.5 76V82M223.5 76V80M224.5 75V80M225.5 76V81M226.5 75V80M227.5 75V79M228.5 73V78M229.5 73V77M230.5 72V76M231.5 71V76M232.5 72V75M233.5 71V75M234.5 72V77M235.5 71V77M236.5 72V76M237.5 72V76M238.5 72V76M239.5 72V76M240.5 72V76M241.5 72V77M242.5 72V76M243.5 72V76M244.5 72V77M245.5 73V76M246.5 72V76M247.5 72V76M248.5 71V76M249.5 71V75M250.5 70V75M251.5 70V75M252.5 70V74M253.5 70V75M254.5 71V75M255.5 71V76M256.5 71V76M257.5 72V77M258.5 72V77M259.5 73V78M260.5 74V79M261.5 74V79M262.5 75V79M263.5 75V80M264.5 76V80M265.5 75V79M266.5 74V79M267.5 74V78M268.5 72V77M269.5 73V77M270.5 72V77M271.5 72V77M272.5 72V77M273.5 73V77M274.5 73V79M275.5 73V77M276.5 73V78M277.5 73V77M278.5 74V79M279.5 75V79M280.5 75V80M281.5 76V80M282.5 76V81M283.5 77V81M284.5 76V82M285.5 77V81M286.5 76V81M287.5 77V82M288.5 77V81M289.5 77V81M290.5 77V81M291.5 77V81M292.5 78V82M293.5 77V82M294.5 78V83M295.5 78V83M296.5 78V83M297.5 79V84M298.5 79V84M299.5 80V84M300.5 80V85M301.5 80V85M302.5 81V85M303.5 81V86M304.5 82V86M305.5 82V86M306.5 82V87M307.5 83V88M308.5 83V87M309.5 84V89M310.5 84V88M311.5 85V88M312.5 84V88M313.5 84V88M314.5 83V88M315.5 84V88M316.5 84V88M317.5 84V88M318.5 85V89M319.5 85V89M320.5 85V89M321.5 85V90M322.5 86V91M323.5 86V91M324.5 86V91M325.5 88V92M326.5 88V92M327.5 88V93M328.5 88V93M329.5 88V93M330.5 88V93M331.5 88V92M332.5 88V93M333.5 89V93M334.5 88V93M335.5 88V92M336.5 88V93M337.5 88V93M338.5 89V93M339.5 90V95M340.5 91V96M341.5 91V96M342.5 91V96M343.5 92V96M344.5 92V96M345.5 92V96M346.5 92V96M347.5 92V98M348.5 93V97M349.5 92V97M350.5 92V97M351.5 93V98M352.5 93V98M353.5 93V98M354.5 94V98M355.5 94V99M356.5 94V99M357.5 95V100M358.5 95V100M359.5 96V100M360.5 96V100M361.5 96V101M362.5 97V101M363.5 98V102M364.5 98V102M365.5 99V104M366.5 99V103M367.5 99V104M368.5 99V103M369.5 99V103M370.5 98V104M371.5 99V104M372.5 99V104M373.5 100V103M374.5 99V104M375.5 100V104M376.5 100V104M377.5 100V104M378.5 100V104M379.5 100V104M380.5 100V105M381.5 101V106M382.5 101V106M383.5 100V106M384.5 102V107M385.5 102V108M386.5 103V108M387.5 103V108M388.5 104V108M389.5 104V109M390.5 104V109M391.5 104V108M392.5 105V109M393.5 105V110M394.5 106V110M395.5 106V110M396.5 107V111M397.5 106V111M398.5 106V111M399.5 107V111M400.5 107V111M401.5 107V111M402.5 107V112M403.5 108V111M404.5 108V111M405.5 107V112M406.5 107V112M407.5 107V111M408.5 108V112M409.5 107V111M410.5 107V112M411.5 107V112M412.5 107V111M413.5 107V111M414.5 106V111M415.5 107V111M416.5 106V110M417.5 105V110M418.5 104V108M419.5 104V108M420.5 104V109M421.5 104V108M422.5 104V109M423.5 105V109M424.5 105V110M425.5 106V110M426.5 106V110M427.5 105V111M428.5 105V110M429.5 106V110M430.5 106V110M431.5 105V110M432.5 105V110M433.5 104V108M434.5 104V109M435.5 104V108M436.5 103V108M437.5 103V107M438.5 102V107M439.5 102V107M440.5 102V107M441.5 103V107M442.5 102V106M443.5 102V106M444.5 102V107M445.5 101V106M446.5 101V105M447.5 101V105M448.5 101V106M449.5 100V105M450.5 100V105M451.5 101V105M452.5 99V105M453.5 100V104M454.5 99V103M455.5 98V103M456.5 98V102M457.5 98V102M458.5 97V102M459.5 97V101M460.5 97V102M461.5 97V101M462.5 97V101M463.5 98V102M464.5 98V103M465.5 96V101M466.5 97V101M467.5 96V101M468.5 97V101M469.5 96V100M470.5 96V100M471.5 95V100M472.5 95V99M473.5 94V99M474.5 94V98M475.5 94V98M476.5 93V97M477.5 93V97M478.5 92V96M479.5 91V96M480.5 89V95M481.5 90V94M482.5 89V94M483.5 90V94M484.5 88V94M485.5 89V93M486.5 87V92M487.5 88V93M488.5 88V93M489.5 88V93M490.5 88V92M491.5 87V92M492.5 87V92M493.5 87V92M494.5 87V91M495.5 87V90M496.5 86V91M497.5 85V90M498.5 86V91M499.5 86V90M500.5 86V90M501.5 86V90M502.5 85V90M503.5 85V90M504.5 85V89M505.5 84V88M506.5 84V89M507.5 84V88M508.5 84V89M509.5 83V88M510.5 84V88M511.5 84V88M512.5 83V87M513.5 82V87M514.5 82V86M515.5 82V86M516.5 81V85M517.5 79V84M518.5 79V83M519.5 79V83M520.5 79V83M521.5 78V83M522.5 78V82M73.5 100V108"/>
</g>
<path fill="#ff7020" d="M67.8 40.3H79.2L73.5 46.3Z"/>
<path fill="#00ff00" d="M509.8 341.5L514.2 337.6V340.7H522V342.3H514.2V345.4Z"/>
<text x="8.6" y="95.5" font-size="12" fill="#ffff00" stroke="#ffff00" stroke-width="0.3" textLength="5.0" lengthAdjust="spacingAndGlyphs">1</text>
<path shape-rendering="crispEdges" fill="#ffff00" d="M16 90h3v-2l4 2.5l-4 2.5v-2h-3z"/>
<text x="8.6" y="165.5" font-size="12" fill="#00ffff" stroke="#00ffff" stroke-width="0.3" textLength="5.0" lengthAdjust="spacingAndGlyphs">2</text>
<path shape-rendering="crispEdges" fill="#00ffff" d="M16 160h3v-2l4 2.5l-4 2.5v-2h-3z"/>
<text x="8.6" y="275.5" font-size="12" fill="#ff00ff" stroke="#ff00ff" stroke-width="0.3" textLength="5.0" lengthAdjust="spacingAndGlyphs">3</text>
<path shape-rendering="crispEdges" fill="#ff00ff" d="M16 270h3v-2l4 2.5l-4 2.5v-2h-3z"/>
<rect x="2" y="419" width="21" height="14" fill="#00ff00" shape-rendering="crispEdges"/>
<text x="7.8" y="431.8" font-size="12" fill="#000" stroke="#000" stroke-width="0.2" textLength="5.6" lengthAdjust="spacingAndGlyphs">4</text>
<path shape-rendering="crispEdges" fill="#000" d="M16 426h4v-2l3 2.5l-3 2.5v-2h-4z"/>
<text x="62.0" y="243.0" font-size="9.5" fill="#00ff00" stroke="#00ff00" stroke-width="0.3" textLength="13.0" lengthAdjust="spacingAndGlyphs">BD</text>
<text x="431.0" y="52.5" font-size="11" fill="#ff00ff" stroke="#ff00ff" stroke-width="0.3" textLength="17.5" lengthAdjust="spacingAndGlyphs">V1 :</text>
<text x="431.0" y="63.5" font-size="11" fill="#ff00ff" stroke="#ff00ff" stroke-width="0.3" textLength="17.5" lengthAdjust="spacingAndGlyphs">V2 :</text>
<text x="431.0" y="74.5" font-size="11" fill="#ff00ff" stroke="#ff00ff" stroke-width="0.3" textLength="17.5" lengthAdjust="spacingAndGlyphs">ΔV :</text>
<text x="464.0" y="52.5" font-size="11" fill="#ff00ff" stroke="#ff00ff" stroke-width="0.3" textLength="40.0" lengthAdjust="spacingAndGlyphs">108.0mV</text>
<text x="474.5" y="63.5" font-size="11" fill="#ff00ff" stroke="#ff00ff" stroke-width="0.3" textLength="25.5" lengthAdjust="spacingAndGlyphs">3.01V</text>
<text x="474.5" y="74.5" font-size="11" fill="#ff00ff" stroke="#ff00ff" stroke-width="0.3" textLength="32.5" lengthAdjust="spacingAndGlyphs">2.902V</text>
<text x="23.5" y="454.0" font-size="11" fill="#ffff00" stroke="#ffff00" stroke-width="0.3" textLength="17.5" lengthAdjust="spacingAndGlyphs">Ch1</text>
<text x="64.5" y="454.0" font-size="11" fill="#ffff00" stroke="#ffff00" stroke-width="0.3" textLength="35.0" lengthAdjust="spacingAndGlyphs">10.0mV</text>
<text x="23.5" y="465.5" font-size="11" fill="#ff00ff" stroke="#ff00ff" stroke-width="0.3" textLength="17.5" lengthAdjust="spacingAndGlyphs">Ch3</text>
<text x="63.5" y="465.5" font-size="11" fill="#ff00ff" stroke="#ff00ff" stroke-width="0.3" textLength="33.0" lengthAdjust="spacingAndGlyphs">500mV</text>
<text x="173.5" y="454.0" font-size="11" fill="#00ffff" stroke="#00ffff" stroke-width="0.3" textLength="17.5" lengthAdjust="spacingAndGlyphs">Ch2</text>
<text x="213.5" y="454.0" font-size="11" fill="#00ffff" stroke="#00ffff" stroke-width="0.3" textLength="36.0" lengthAdjust="spacingAndGlyphs">20.0mV</text>
<text x="173.5" y="465.5" font-size="11" fill="#00ff00" stroke="#00ff00" stroke-width="0.3" textLength="17.5" lengthAdjust="spacingAndGlyphs">Ch4</text>
<text x="215.0" y="465.5" font-size="11" fill="#00ff00" stroke="#00ff00" stroke-width="0.3" textLength="18.0" lengthAdjust="spacingAndGlyphs">1.0V</text>
<path fill="none" stroke="#ffff00" stroke-width="1.1" d="M108.0 450C108.0 444.5,110.5 444.5,110.5 450S113.0 455.5,113.0 450"/>
<path fill="none" stroke="#00ffff" stroke-width="1.1" d="M258.0 450C258.0 444.5,260.5 444.5,260.5 450S263.0 455.5,263.0 450"/>
<text x="122" y="464.0" font-size="8.5" fill="#ff00ff" stroke="#ff00ff" stroke-width="0.3">B</text>
<text x="127.6" y="465.8" font-size="8.5" fill="#ff00ff" stroke="#ff00ff" stroke-width="0.3">W</text>
<text x="272" y="464.0" font-size="8.5" fill="#00ff00" stroke="#00ff00" stroke-width="0.3">B</text>
<text x="277.6" y="465.8" font-size="8.5" fill="#00ff00" stroke="#00ff00" stroke-width="0.3">W</text>
<text x="323.5" y="454.0" font-size="11" fill="#e8e8e8" stroke="#e8e8e8" stroke-width="0.3" textLength="86.0" lengthAdjust="spacingAndGlyphs">M 40.0ms 125kS/s</text>
<text x="433.0" y="454.0" font-size="11" fill="#e8e8e8" stroke="#e8e8e8" stroke-width="0.3" textLength="37.5" lengthAdjust="spacingAndGlyphs">8.0µs/pt</text>
<text x="323.5" y="465.5" font-size="11" fill="#e8e8e8" stroke="#e8e8e8" stroke-width="0.3" textLength="6.5" lengthAdjust="spacingAndGlyphs">A</text>
<text x="336.0" y="465.5" font-size="11" fill="#00ff00" stroke="#00ff00" stroke-width="0.3" textLength="17.0" lengthAdjust="spacingAndGlyphs">Ch4</text>
<path fill="none" stroke="#e8e8e8" stroke-width="1" shape-rendering="crispEdges" d="M362 464.0h2l2 -5h2"/>
<text x="375.0" y="465.5" font-size="11" fill="#e8e8e8" stroke="#e8e8e8" stroke-width="0.3" textLength="20.0" lengthAdjust="spacingAndGlyphs">1.7V</text>
</svg>
<div id="panel">
<div class="pill" style="left:64px;top:4px;width:47px;height:21px"><span>Buttons</span></div>
<div class="blk" style="top:27px;height:4px"></div>
<div class="blk" style="top:78px;height:5px"></div>
<div class="sep" style="top:130px"></div>
<div class="lb" style="left:24.7px;top:37.8px;font-size:12px;line-height:14px;font-weight:bold;color:#fff;letter-spacing:0.39px;">Curs1 Pos</div>
<div class="fld" style="left:10px;top:56px;width:93px;height:19px"></div>
<div class="lb" style="left:35.7px;top:59.0px;font-size:12px;line-height:14px;color:#fff;transform:scaleX(0.8724);transform-origin:0 0;">108.0mV</div>
<div class="lb" style="left:24.7px;top:89.8px;font-size:12px;line-height:14px;font-weight:bold;color:#fff;letter-spacing:0.39px;">Curs2 Pos</div>
<div class="fld" style="left:10px;top:108px;width:93px;height:19px"></div>
<div class="lb" style="left:43.5px;top:111.0px;font-size:12px;line-height:14px;color:#fff;transform:scaleX(0.8769);transform-origin:0 0;">3.01V</div>
<div class="btn sel" style="left:5px;top:135px;width:45px;height:27px"></div>
<div class="btn" style="left:61px;top:135px;width:46px;height:27px"></div>
<div class="lb" style="left:9.8px;top:143.0px;font-size:13px;line-height:15px;color:#000;transform:scaleX(0.7894);transform-origin:0 0;">Cursor1</div>
<div class="lb" style="left:66.0px;top:142.0px;font-size:13px;line-height:15px;color:#000;transform:scaleX(0.8002);transform-origin:0 0;">Cursor2</div>
<div class="tabbody" style="left:5px;top:191px;width:104px;height:101px"></div>
<div class="tab on" style="left:5px;top:168px;width:34px;height:24px"></div>
<div class="tab" style="left:40px;top:168px;width:33px;height:23px"></div>
<div class="tab" style="left:74px;top:168px;width:34px;height:23px"></div>
<div class="tsep" style="left:39px;top:171px;height:20px"></div>
<div class="tsep" style="left:73px;top:171px;height:20px"></div>
<div class="lb" style="left:14.5px;top:172.2px;font-size:12.5px;line-height:14px;color:#fff;transform:scaleX(0.9262);transform-origin:0 0;">Ch</div>
<div class="lb" style="left:42.0px;top:172.2px;font-size:12.5px;line-height:14px;color:#fff;transform:scaleX(0.9357);transform-origin:0 0;">Math</div>
<div class="lb" style="left:80.8px;top:172.2px;font-size:12.5px;line-height:14px;color:#fff;transform:scaleX(0.9151);transform-origin:0 0;">Ref</div>
<div class="lb" style="left:31.5px;top:195.7px;font-size:12.5px;line-height:14px;color:#fff;transform:scaleX(0.9880);transform-origin:0 0;">Channel</div>
<div class="btn" style="left:24px;top:215px;width:27px;height:27px"><i class="led" style="background:#e8e000"></i><b class="num">1</b></div>
<div class="btn" style="left:62px;top:215px;width:27px;height:27px"><i class="led" style="background:#40c8ff"></i><b class="num">2</b></div>
<div class="btn sel" style="left:24px;top:253px;width:27px;height:27px"><i class="led" style="background:#e838e0"></i><b class="num">3</b></div>
<div class="btn" style="left:62px;top:253px;width:27px;height:27px"><i class="led" style="background:#00d020"></i><b class="num">4</b></div>
<div class="grp" style="left:0px;top:312px;width:112px;height:110px"></div>
<div class="grpt" style="left:14px;top:304px;width:84px;height:16px"></div>
<div class="lb" style="left:19.0px;top:306.0px;font-size:12px;line-height:14px;font-weight:bold;color:#fff;letter-spacing:0.45px;">Cursor Type</div>
<div class="lb" style="left:11.7px;top:321.5px;font-size:12px;line-height:14px;color:#fff;transform:scaleX(0.7989);transform-origin:0 0;">H Bars</div>
<div class="lb" style="left:60.7px;top:321.5px;font-size:12px;line-height:14px;color:#fff;transform:scaleX(0.8409);transform-origin:0 0;">Waveform</div>
<div class="lb" style="left:11.7px;top:366.0px;font-size:12px;line-height:14px;color:#fff;transform:scaleX(0.8136);transform-origin:0 0;">V Bars</div>
<div class="lb" style="left:69.0px;top:366.0px;font-size:12px;line-height:14px;color:#fff;transform:scaleX(0.7890);transform-origin:0 0;">Screen</div>
<div class="btn sel" style="left:5px;top:336px;width:45px;height:27px"><svg width="45" height="27" viewBox="0 0 45 27" style="position:absolute;left:-1px;top:-1px"><path fill="none" stroke="#00e000" stroke-width="1.2" d="M8 6.5H37M8 19.5H37"/><path fill="none" stroke="#000090" stroke-width="1.2" d="M14 19.500h3c2.500 0 2.500 -13 5 -13s3.500 13 6.500 13.500c1.500 0.300 2 2 3.500 2s2 -2 5 -2"/></svg></div>
<div class="btn" style="left:61px;top:336px;width:46px;height:27px"><svg width="46" height="27" viewBox="0 0 46 27" style="position:absolute;left:-1px;top:-1px"><path fill="none" stroke="#000090" stroke-width="1.2" d="M8 12.5h8c1 0 1 -7.5 3 -7.5h3.500c2 0 2 7.500 3 7.500h10.500M8 15.500h21c2 0 1.500 6.500 3.500 6.500h3.500"/><path fill="none" stroke="#00e000" stroke-width="1.3" d="M13.500 6l4 4M28 16.500l4.500 5"/></svg></div>
<div class="btn" style="left:5px;top:380px;width:45px;height:27px"><svg width="45" height="27" viewBox="0 0 45 27" style="position:absolute;left:-1px;top:-1px"><path fill="none" stroke="#000090" stroke-width="1.2" d="M8 18.500h6c2.500 0 2.500 -12 6.500 -12s4 12 7 12c1 0 1.500 2 3 2s1.500 -2 3 -2h3"/><path fill="none" stroke="#00e000" stroke-width="1.2" d="M16 3V22M32 3V22"/></svg></div>
<div class="btn" style="left:61px;top:380px;width:46px;height:27px"><svg width="46" height="27" viewBox="0 0 46 27" style="position:absolute;left:-1px;top:-1px"><rect x="12.500" y="3.500" width="21" height="19" fill="#d8d8d8" stroke="#000" stroke-width="1"/><path fill="none" stroke="#00e000" stroke-width="1.2" d="M17.500 4V22M27.500 4V22M13 8.500H33M13 17.500H33"/></svg></div>
<div class="bbtn" style="left:6px;top:424px;width:45px;height:27px"></div>
<div class="bbtn" style="left:64px;top:424px;width:45px;height:27px"></div>
<div class="lb" style="left:13.5px;top:431.0px;font-size:12px;line-height:14px;color:#fff;transform:scaleX(0.8132);transform-origin:0 0;">Setup</div>
<div class="lb" style="left:72.5px;top:431.0px;font-size:12px;line-height:14px;color:#fff;transform:scaleX(0.7986);transform-origin:0 0;">Close</div>
</div>
</body></html>
